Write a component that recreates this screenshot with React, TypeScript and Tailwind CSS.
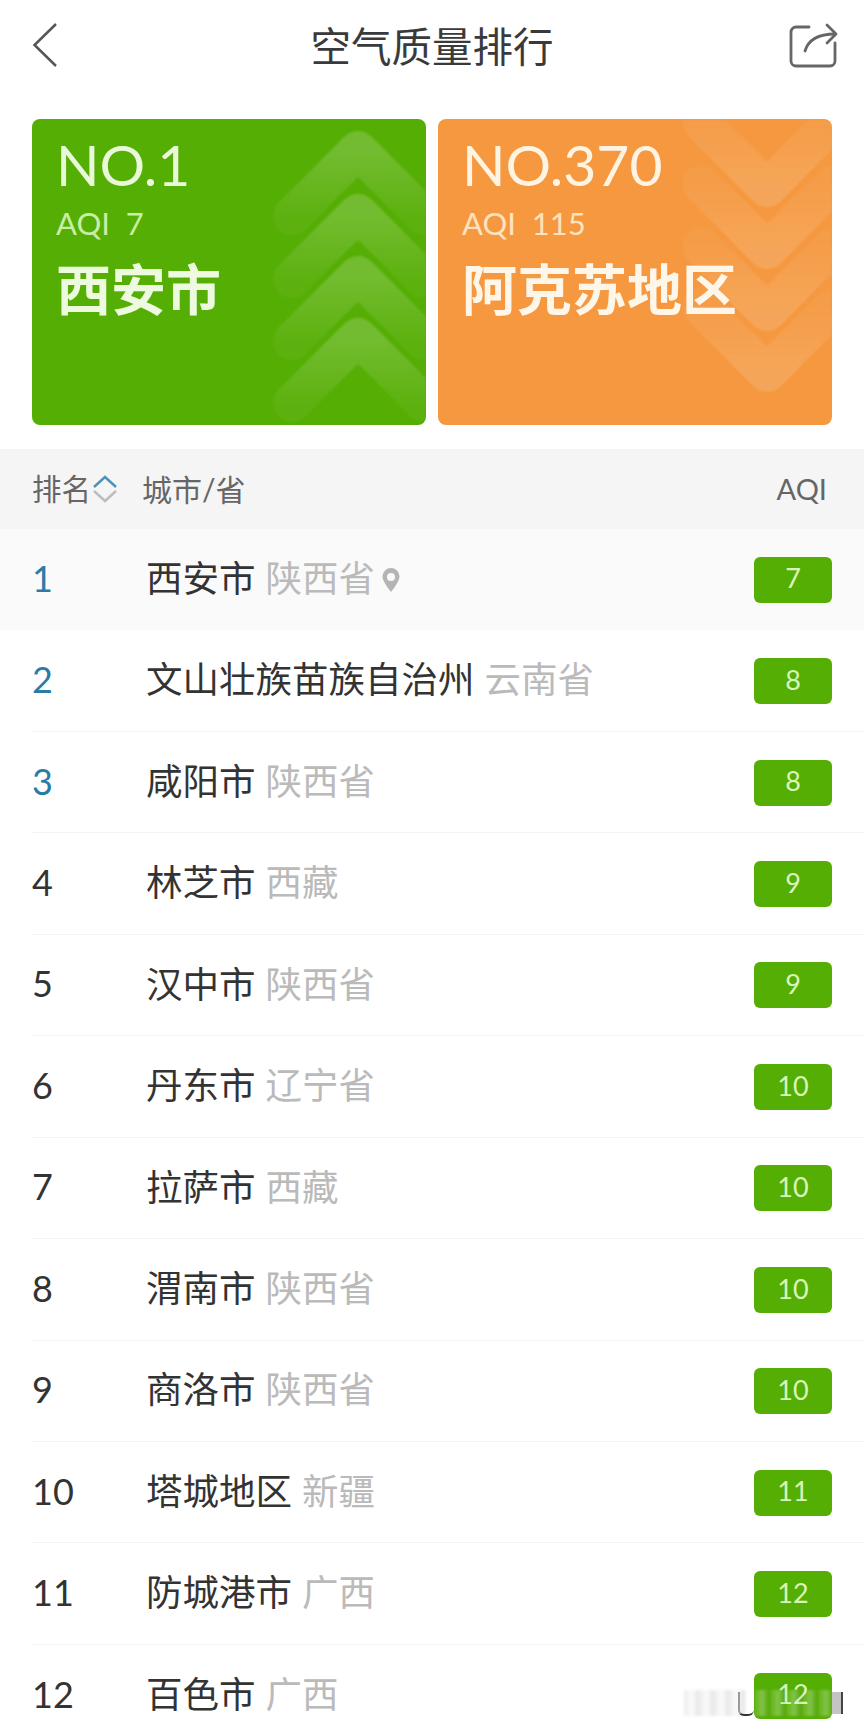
const cjk = "font-['Lato','Noto_Sans_CJK_SC',sans-serif]";

const rows = [
  { rank: 1, city: "西安市", prov: "陕西省", aqi: 7, pin: true },
  { rank: 2, city: "文山壮族苗族自治州", prov: "云南省", aqi: 8 },
  { rank: 3, city: "咸阳市", prov: "陕西省", aqi: 8 },
  { rank: 4, city: "林芝市", prov: "西藏", aqi: 9 },
  { rank: 5, city: "汉中市", prov: "陕西省", aqi: 9 },
  { rank: 6, city: "丹东市", prov: "辽宁省", aqi: 10 },
  { rank: 7, city: "拉萨市", prov: "西藏", aqi: 10 },
  { rank: 8, city: "渭南市", prov: "陕西省", aqi: 10 },
  { rank: 9, city: "商洛市", prov: "陕西省", aqi: 10 },
  { rank: 10, city: "塔城地区", prov: "新疆", aqi: 11 },
  { rank: 11, city: "防城港市", prov: "广西", aqi: 12 },
  { rank: 12, city: "百色市", prov: "广西", aqi: 12 },
];

function Chevrons({ down }: { down?: boolean }) {
  // stacked arrows behind the card text, drawn in card coordinates
  const id = down ? "fadeDown" : "fadeUp";
  const offsets = down ? [69, 131, 193, 254] : [31, 94, 156, 218];
  const cx = down ? 329 : 326;
  return (
    <svg className="absolute inset-0 h-full w-full blur-[1px]" viewBox="0 0 394 306">
      <defs>
        <linearGradient id={id} x1="0" y1={down ? "1" : "0"} x2="0" y2={down ? "0" : "1"}>
          <stop offset="0" stopColor="#fff" stopOpacity={down ? "0.14" : "0.18"} />
          <stop offset="1" stopColor="#fff" stopOpacity="0.05" />
        </linearGradient>
      </defs>
      {offsets.map((y) => (
        <polyline
          key={y}
          points={down ? `${cx - 66},${y - 66} ${cx},${y} ${cx + 66},${y - 66}` : `${cx - 66},${y + 66} ${cx},${y} ${cx + 66},${y + 66}`}
          fill="none"
          stroke={`url(#${id})`}
          strokeWidth="38"
          strokeLinecap="round"
          strokeLinejoin="round"
        />
      ))}
    </svg>
  );
}

function TopCard({ no, aqi, city, green }: { no: string; aqi: string; city: string; green?: boolean }) {
  return (
    <div className={`relative h-[306px] flex-1 overflow-hidden rounded-lg pl-[24px] ${green ? "bg-[#55ae04]" : "bg-[#f5983f]"}`}>
      <Chevrons down={!green} />
      <div className="relative">
        <div className={`mt-[13px] h-[64px] text-[57px] leading-[64px] font-normal ${green ? "text-[#e9f8d8]" : "text-[#fff3e2]"}`}>{no}</div>
        <div className={`mt-[9px] h-[36px] text-[31px] leading-[36px] font-normal whitespace-pre ${green ? "text-[#c9eda3]" : "text-[#fde2bd]"}`}>{aqi}</div>
        <div className={`mt-[16px] text-[55px] leading-[64px] font-bold ${green ? "text-[#edfadf]" : "text-[#fff6ea]"}`}>{city}</div>
      </div>
    </div>
  );
}

function Row({ rank, city, prov, aqi, pin }: { rank: number; city: string; prov: string; aqi: number; pin?: boolean }) {
  return (
    <div className={`relative flex h-[101.45px] items-center pr-[32px] pl-[32px] ${pin ? "bg-[#fafafa]" : ""}`}>
      <div className={`w-[114px] pb-[4px] text-[36px] font-normal ${rank <= 3 ? "text-[#2b7ba8]" : "text-[#333333]"}`}>{rank}</div>
      <div className="pb-[3px] text-[36.500px] leading-none font-normal text-[#333333]">{city}</div>
      <div className="ml-[10px] pb-[3px] text-[36.500px] leading-none font-normal text-[#bababa]">{prov}</div>
      {pin && (
        <svg className="ml-[6px]" width="20" height="26" viewBox="0 0 20 26">
          <path fillRule="evenodd" fill="#b4b4b4" d="M10 1a8.5 8.5 0 0 0-8.5 8.5C1.500 15 10 25 10 25s8.500-10 8.500-15.500A8.500 8.500 0 0 0 10 1zm0 5a4 4 0 1 1 0 8 4 4 0 0 1 0-8z" />
        </svg>
      )}
      <div className="ml-auto flex h-[46px] w-[78px] items-center justify-center rounded-md bg-[#55ae04] pb-[2px] text-[27px] font-normal text-[#d9f5b8]">{aqi}</div>
      {rank < 12 && !pin && <div className="absolute right-0 bottom-0 left-[32px] h-px bg-[#f4f4f4]" />}
    </div>
  );
}

export default function App() {
  return (
    <div className={`relative h-[1735px] w-[864px] overflow-hidden bg-white ${cjk}`}>
      <div className="relative flex h-[119px] items-start justify-between pr-[25px] pl-[32px] pt-[22px]">
        <svg width="26" height="46" viewBox="0 0 26 46" fill="none" stroke="#555" strokeWidth="2.500">
          <path d="M24 2 2.500 23 24 44" />
        </svg>
        <div className="absolute top-[20px] left-0 w-full text-center text-[40.500px] leading-[54px] font-normal text-[#3a3a3a]">空气质量排行</div>
        <svg width="50" height="46" viewBox="0 0 50 46" fill="none" stroke="#666" strokeWidth="2.800" strokeLinecap="round" strokeLinejoin="round">
          <path d="M20 5H7a5 5 0 0 0-5 5v29a5 5 0 0 0 5 5h34a5 5 0 0 0 5-5V21" />
          <path d="M16 29c3-10 11-17 30-17" />
          <path d="M38 3l9 9-9 9" />
        </svg>
      </div>

      <div className="flex gap-[12px] px-[32px]">
        <TopCard green no="NO.1" aqi="AQI  7" city="西安市" />
        <TopCard no="NO.370" aqi="AQI  115" city="阿克苏地区" />
      </div>

      <div className="mt-[24px] flex h-[80px] items-center bg-[#f5f5f5] pr-[37px] pl-[32px] text-[29px] font-normal text-[#666666]">
        <span className="text-[29.500px]">排名</span>
        <svg className="ml-[1px]" width="26" height="30" viewBox="0 0 26 30" fill="none" strokeWidth="2.500">
          <path d="M2 13l11-10 11 10" stroke="#4f93b8" />
          <path d="M2 17l11 10 11-10" stroke="#bdbdbd" />
        </svg>
        <span className="ml-[24px] text-[30px]">城市/省</span>
        <span className="ml-auto">AQI</span>
      </div>

      {rows.map((r) => (
        <Row key={r.rank} {...r} />
      ))}

      {/* blurred watermark over the last row */}
      <div className="absolute top-[1690px] left-[684px] h-[26px] w-[62px] bg-[repeating-linear-gradient(90deg,#ededed_0,#fbfbfb_8px,#e4e4e4_15px)] blur-[1.500px]" />
      <div className="absolute top-[1692px] left-[738px] h-[24px] w-[16px] rounded-b-md border-b-2 border-l-2 border-b-[#333333] border-l-[#999999] blur-[0.5px]" />
      <div className="absolute top-[1690px] left-[754px] h-[26px] w-[78px] bg-[repeating-linear-gradient(90deg,rgba(255,255,255,0.06)_0,rgba(255,255,255,0.28)_8px,rgba(0,0,0,0.06)_16px)] blur-[1px]" />
      <div className="absolute top-[1692px] left-[832px] h-[22px] w-[11px] border-r-2 border-r-[#444444] bg-[#c4c4c4] blur-[0.5px]" />
    </div>
  );
}
